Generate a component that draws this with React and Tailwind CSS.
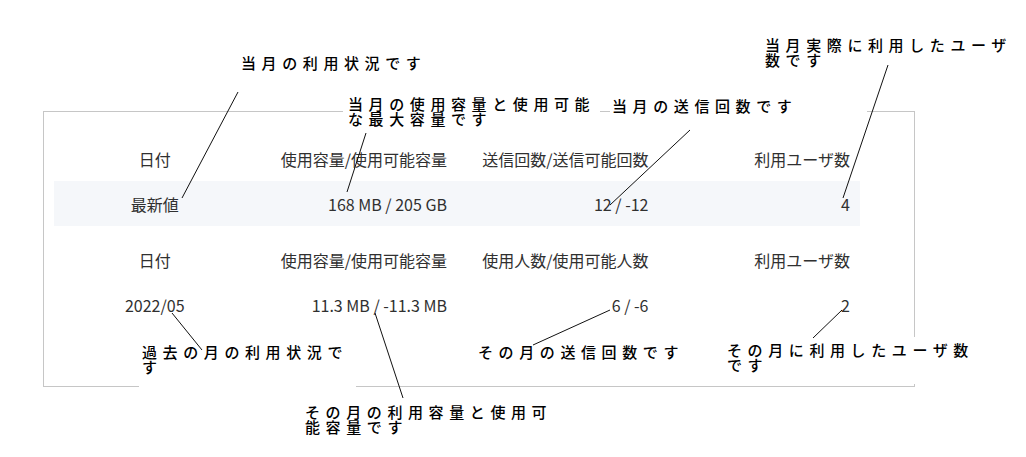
import React from "react";

const font = { fontFamily: '"Noto Sans CJK JP", "Noto Sans", sans-serif' };

function Row({ cells, highlight }) {
  return (
    <div className={`grid grid-cols-4 h-[45px] items-center text-[16px] leading-[20px] text-[#303030] ${highlight ? "bg-[#f5f7fa]" : ""}`}>
      {cells.map((c, i) => (
        <div key={i} className={i === 0 ? "text-center" : "text-right pr-[10px]"}>
          {c}
        </div>
      ))}
    </div>
  );
}

function Label({ className, children }) {
  return (
    <div className={`absolute bg-white text-black text-[15px] leading-[15px] tracking-[5.6px] font-medium whitespace-nowrap ${className}`}>
      {children}
    </div>
  );
}

export default function App() {
  const lines = [
    [238, 92, 182, 198],
    [366, 133, 347, 192],
    [690, 130, 610, 205],
    [888, 65, 843, 198],
    [172, 313, 202, 350],
    [375, 313, 403, 398],
    [610, 310, 533, 345],
    [842, 310, 813, 338],
  ];
  return (
    <div className="relative w-[1026px] h-[457px] bg-white overflow-hidden" style={font}>
      <div className="pt-[111px] pl-[43px]">
        <div className="w-[872px] h-[276px] border border-[#c6c6c6] pt-[24px] pl-[10px] flex flex-col gap-[11px]">
          <div className="w-[806px]">
            <Row cells={["日付", "使用容量/使用可能容量", "送信回数/送信可能回数", "利用ユーザ数"]} />
            <Row highlight cells={["最新値", "168 MB / 205 GB", "12 / -12", "4"]} />
          </div>
          <div className="w-[806px]">
            <Row cells={["日付", "使用容量/使用可能容量", "使用人数/使用可能人数", "利用ユーザ数"]} />
            <Row cells={["2022/05", "11.3 MB / -11.3 MB", "6 / -6", "2"]} />
          </div>
        </div>
      </div>

      <Label className="left-[241px] top-[55px]">当月の利用状況です</Label>
      <Label className="left-[343px] top-[95px] w-[257px] h-[35px] pl-[5px] pt-[1px]">
        当月の使用容量と使用可能
        <br />
        な最大容量です
      </Label>
      <Label className="left-[610px] top-[97px] w-[257px] h-[30px] pl-[2px] pt-[1px]">当月の送信回数です</Label>
      <Label className="left-[764px] top-[36px] pl-[1px] pt-[1px]">
        当月実際に利用したユーザ
        <br />
        数です
      </Label>
      <Label className="left-[139px] top-[342px] w-[217px] h-[45px] pl-[3px] pt-[2px]">
        過去の月の利用状況で
        <br />
        す
      </Label>
      <Label className="left-[477px] top-[344px] pl-[1px]">その月の送信回数です</Label>
      <Label className="left-[724px] top-[337px] w-[252px] h-[47px] pl-[3px] pt-[5px]">
        その月に利用したユーザ数
        <br />
        です
      </Label>
      <Label className="left-[303px] top-[403px] pl-[2px] pt-[1px]">
        その月の利用容量と使用可
        <br />
        能容量です
      </Label>

      <svg className="absolute left-0 top-0 pointer-events-none" width="1026" height="457">
        {lines.map(([x1, y1, x2, y2], i) => (
          <line key={i} x1={x1} y1={y1} x2={x2} y2={y2} stroke="#111" strokeWidth="1" />
        ))}
      </svg>
    </div>
  );
}
